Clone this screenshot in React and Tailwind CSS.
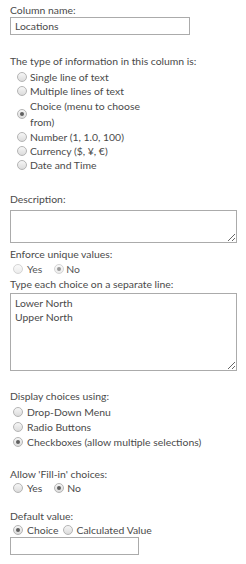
import React from "react";

const font = { fontFamily: 'Lato, "Open Sans", sans-serif' };

function Radio({ checked, disabled }) {
  return (
    <span
      className={
        "inline-flex shrink-0 items-center justify-center w-[10px] h-[10px] rounded-full border " +
        (disabled
          ? "border-[#d4d4d4] bg-gradient-to-b from-[#fafafa] to-[#ececec]"
          : "border-[#b4b4b4] bg-gradient-to-b from-[#f6f6f6] to-[#dcdcdc]")
      }
    >
      {checked && (
        <span
          className={
            "block w-[4px] h-[4px] rounded-full " +
            (disabled ? "bg-[#9a9a9a]" : "bg-[#5f5f5f]")
          }
        />
      )}
    </span>
  );
}

function Opt({ checked, children, gap = "ml-[3px]", h = "h-[14px]" }) {
  return (
    <div className={"flex items-center leading-[14px] " + h}>
      <Radio checked={checked} />
      <span className={gap}>{children}</span>
    </div>
  );
}

export default function App() {
  return (
    <div
      className="w-[246px] h-[564px] bg-white px-[10px] pt-[4px] text-[10.4px] text-[#4a4a4a] antialiased"
      style={font}
    >
      <div className="h-[13px] leading-[13px]">Column name:</div>
      <div className="w-[180px] h-[18px] border border-[#ababab] px-[4px] flex items-center leading-[14px]">
        Locations
      </div>

      <div className="mt-[19px] h-[14px] leading-[14px]">
        The type of information in this column is:
      </div>
      <div className="mt-[2px] pl-[7px]">
        <Opt>Single line of text</Opt>
        <Opt>Multiple lines of text</Opt>
        <div className="flex items-center h-[32px]">
          <Radio checked />
          <span className="ml-[3px] leading-[16px]">
            Choice (menu to choose
            <br />
            from)
          </span>
        </div>
        <Opt>Number (1, 1.0, 100)</Opt>
        <Opt>Currency ($, ¥, €)</Opt>
        <Opt>Date and Time</Opt>
      </div>

      <div className="mt-[20px] h-[14px] leading-[14px]">Description:</div>
      <textarea
        readOnly
        className="mt-[4px] block w-[227px] h-[33px] border border-[#ababab] outline-none resize"
        style={font}
      />

      <div className="mt-[4px] h-[14px] leading-[14px]">Enforce unique values:</div>
      <div className="mt-[1px] pl-[3px] flex items-center h-[14px] leading-[14px]">
        <Radio disabled />
        <span className="ml-[4px] text-[#555]">Yes</span>
        <span className="ml-[12px] flex">
          <Radio checked disabled />
        </span>
        <span className="ml-[2px] text-[#555]">No</span>
      </div>

      <div className="mt-[1px] h-[14px] leading-[14px]">
        Type each choice on a separate line:
      </div>
      <textarea
        readOnly
        className="mt-[2px] block w-[227px] h-[78px] border border-[#ababab] outline-none resize px-[4px] py-[2px] text-[10.4px] leading-[14px] text-[#4a4a4a]"
        style={font}
        defaultValue={"Lower North\nUpper North"}
      />

      <div className="mt-[18px] h-[14px] leading-[14px]">Display choices using:</div>
      <div className="mt-[1px] pl-[3px]">
        <Opt gap="ml-[4px]" h="h-[15px]">Drop-Down Menu</Opt>
        <Opt gap="ml-[4px]" h="h-[15px]">Radio Buttons</Opt>
        <Opt gap="ml-[4px]" h="h-[15px]" checked>
          Checkboxes (allow multiple selections)
        </Opt>
      </div>

      <div className="mt-[18px] h-[14px] leading-[14px]">Allow 'Fill-in' choices:</div>
      <div className="pl-[3px] flex items-center h-[14px] leading-[14px]">
        <Radio />
        <span className="ml-[4px]">Yes</span>
        <span className="ml-[12px] flex">
          <Radio checked />
        </span>
        <span className="ml-[3px]">No</span>
      </div>

      <div className="mt-[14px] h-[14px] leading-[14px]">Default value:</div>
      <div className="pl-[3px] flex items-center h-[14px] leading-[14px]">
        <Radio checked />
        <span className="ml-[4px]">Choice</span>
        <span className="ml-[5px] flex">
          <Radio />
        </span>
        <span className="ml-[3px]">Calculated Value</span>
      </div>
      <div className="w-[129px] h-[18px] border border-[#ababab]" />
    </div>
  );
}
